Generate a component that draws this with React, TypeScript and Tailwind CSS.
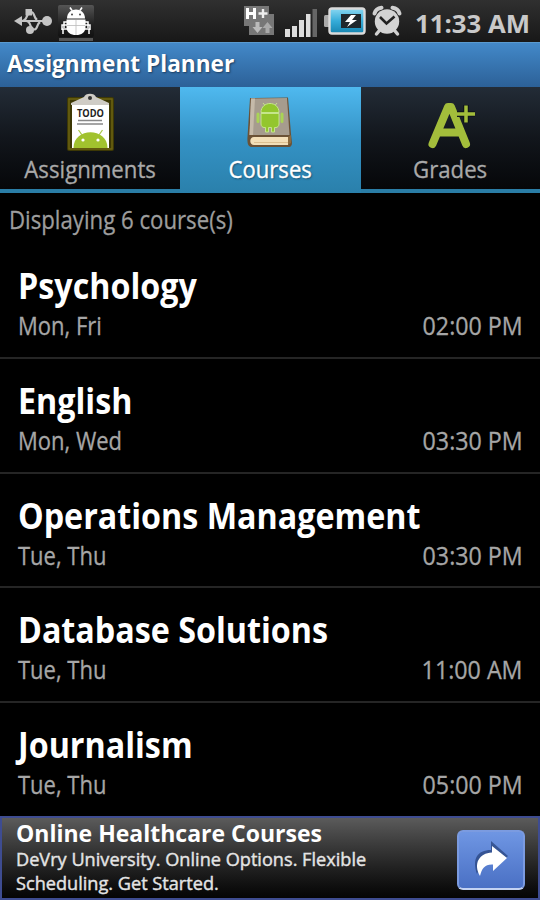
import type { ReactNode } from "react";

const courses = [
  { name: "Psychology", days: "Mon, Fri", time: "02:00 PM" },
  { name: "English", days: "Mon, Wed", time: "03:30 PM" },
  { name: "Operations Management", days: "Tue, Thu", time: "03:30 PM" },
  { name: "Database Solutions", days: "Tue, Thu", time: "11:00 AM" },
  { name: "Journalism", days: "Tue, Thu", time: "05:00 PM" },
];

function UsbIcon() {
  return (
    <svg width="40" height="28" viewBox="0 0 40 28" className="shrink-0" fill="#c4c4c4" stroke="#c4c4c4">
      <path d="M6 14H34M9 14C15 14 13 5 18 5C22 5 20 10 24 13M13 14C19 14 16 22.500 21 22.500C25 22.500 23 18 27 15" fill="none" strokeWidth="2.200" />
      <path d="M1 14L9 9V19Z" stroke="none" />
      <circle cx="34" cy="14" r="5" stroke="none" />
      <rect x="12.500" y="2" width="6.500" height="6.500" stroke="none" />
      <circle cx="17" cy="23" r="4" stroke="none" />
    </svg>
  );
}

function DebugIcon() {
  return (
    <svg width="36" height="38" viewBox="0 0 36 38" className="shrink-0">
      <defs>
        <linearGradient id="debugBg" x1="0" y1="0" x2="0" y2="1">
          <stop offset="0" stopColor="#555" />
          <stop offset="0.600" stopColor="#222" />
          <stop offset="1" stopColor="#111" />
        </linearGradient>
      </defs>
      <rect width="36" height="32" rx="2" fill="url(#debugBg)" />
      <rect x="1" y="33" width="34" height="3" fill="#555" />
      <path d="M12 2.500L14 5.500M24 2.500L22 5.500" stroke="#fff" strokeWidth="1.600" />
      <path d="M9 17H6V23M27 17H30V23M9 20H4V25M27 20H32V25M9 24H5V29M27 24H31V29" stroke="#fff" strokeWidth="1.500" fill="none" />
      <path d="M9 13.500C9 1.500 27 1.500 27 13.500Z" fill="#fff" />
      <path d="M8.500 14.500H27.500V22C27.500 27.500 23.500 30 18 30C12.500 30 8.500 27.500 8.500 22Z" fill="#fff" />
      <path d="M18 15V30M9 20.500H27" stroke="#bbb" strokeWidth="0.800" />
      <circle cx="14" cy="9.500" r="1" fill="#444" />
      <circle cx="22" cy="9.500" r="1" fill="#444" />
    </svg>
  );
}

function DataIcon() {
  return (
    <svg width="32" height="32" viewBox="0 0 32 32" className="shrink-0">
      <path d="M1 1H26V9H31V30H6V21H1Z" fill="#777" />
      <path d="M4.500 3V14M11.500 3V14M4.500 8.500H11.500" stroke="#fff" strokeWidth="3" />
      <path d="M20 4V13M15.500 8.500H24.500" stroke="#eee" strokeWidth="2.400" />
      <path d="M12.500 17H16.500V22H19.500L14.500 28L9.500 22H12.500Z" fill="#bbb" />
      <path d="M22.500 28H26.500V23H29.500L24.500 17L19.500 23H22.500Z" fill="#aaa" />
    </svg>
  );
}

function SignalIcon() {
  return (
    <svg width="34" height="30" viewBox="0 0 34 30" className="shrink-0">
      <g fill="#dcdcdc">
        <rect x="1" y="21" width="5" height="8" />
        <rect x="8" y="18" width="5" height="11" />
        <rect x="15" y="12" width="5" height="17" />
        <rect x="22" y="6" width="4.500" height="23" />
      </g>
      <rect x="28.500" y="1" width="4.500" height="28" fill="#666" />
    </svg>
  );
}

function BatteryIcon() {
  return (
    <svg width="42" height="28" viewBox="0 0 42 28" className="shrink-0">
      <defs>
        <linearGradient id="battery" x1="0" y1="0" x2="0" y2="1">
          <stop offset="0" stopColor="#8bd8f2" />
          <stop offset="0.500" stopColor="#35acd9" />
          <stop offset="1" stopColor="#1684b0" />
        </linearGradient>
      </defs>
      <rect x="0" y="8" width="6" height="12" rx="1.500" fill="#aaa" />
      <rect x="5.500" y="1.500" width="35" height="25" rx="2.500" fill="url(#battery)" stroke="#dadada" strokeWidth="2.400" />
      <rect x="17" y="7" width="20" height="14" fill="#20282d" />
      <path d="M27 8L21 15H26L23 20L33 13H28L32 8Z" fill="#fff" />
    </svg>
  );
}

function AlarmIcon() {
  return (
    <svg width="32" height="32" viewBox="0 0 32 32" className="shrink-0">
      <g stroke="#d0d0d0" fill="none" strokeLinecap="round">
        <path d="M3.500 8.500C4.500 5 7 3.200 10.500 2.800M28.500 8.500C27.500 5 25 3.200 21.500 2.800" strokeWidth="4" />
        <path d="M8 26L5.500 29M24 26L26.500 29" strokeWidth="3.500" />
      </g>
      <circle cx="16" cy="16.500" r="12.200" fill="#d3d3d3" />
      <path d="M9 12L15.500 18.500L23.500 11.500" fill="none" stroke="#222" strokeWidth="2.600" />
    </svg>
  );
}

function TodoIcon() {
  return (
    <svg width="50" height="60" viewBox="0 0 50 60">
      <rect x="2" y="4" width="47" height="54" rx="2" fill="#3d3805" />
      <rect x="4" y="6" width="43" height="50" fill="none" stroke="#6e6412" strokeWidth="1.500" />
      <rect x="7" y="11" width="37" height="44" fill="#fff" />
      <path d="M6 12V10L19 4C20-0.500 30-0.500 31 4L44 10V12Z" fill="#cfccc6" />
      <circle cx="25" cy="5" r="2" fill="#333" />
      <text x="12" y="24" textLength="27" lengthAdjust="spacingAndGlyphs" fontFamily="Open Sans, sans-serif" fontWeight="700" fontSize="10" fill="#222">TODO</text>
      <path d="M13 27.500H37M12 31H38" stroke="#888" strokeWidth="1.300" />
      <path d="M8.500 55C8.500 34 42.500 34 42.500 55Z" fill="#a1c22e" />
      <path d="M17 42L13.500 37M34 42L37.500 37" stroke="#a9c94a" strokeWidth="1.300" />
      <circle cx="18" cy="47" r="1.600" fill="#fff" />
      <circle cx="33" cy="47" r="1.600" fill="#fff" />
    </svg>
  );
}

function BookIcon() {
  return (
    <svg width="48" height="60" viewBox="0 0 48 60">
      <path d="M4 5L42 4.500L45 41L46 50C46 52 45 54 43 54H6C2.500 54 1 51 1.500 44Z" fill="#6b5236" />
      <path d="M5 5.500L41 5L43.500 42H3.500Z" fill="#a69c8e" />
      <path d="M5 5.500L9 5.500L7 42H3.500Z" fill="#c5baa9" />
      <path d="M42 44H8C3 44 3 52 8 52H42Z" fill="#f3dfb8" />
      <path d="M8 49.500H42" stroke="#dcbf90" strokeWidth="1" />
      <path d="M42 44L45 42V50L42 52" fill="#8b6a3e" />
      <g stroke="#c5e68b" strokeWidth="1">
        <path d="M17 10L19.500 13M31 10L28.500 13" />
        <path d="M15 19.500C15 7.500 33 7.500 33 19.500Z" fill="#93c62e" />
        <path d="M15 20.500H33V31C33 33 31.500 34.500 30 34.500H28.500V39H25.500V34.500H22.500V39H19.500V34.500H18C16.500 34.500 15 33 15 31Z" fill="#93c62e" />
        <path d="M12 21V28.500M36 21V28.500" stroke="#a9d455" strokeWidth="3" strokeLinecap="round" />
      </g>
    </svg>
  );
}

function GradeIcon() {
  return (
    <svg width="52" height="60" viewBox="0 0 52 60" fill="none">
      <path d="M8.500 51L24 14H27L42 51M15 39.500H36" stroke="#a3bd3b" strokeWidth="8" strokeLinecap="round" strokeLinejoin="round" />
      <path d="M42 12V30M33 21H51" stroke="#10151b" strokeWidth="6" />
      <path d="M42 12.500V29.500M33 21H51" stroke="#a3bd3b" strokeWidth="3.500" />
    </svg>
  );
}

function Tab({ icon, label, active }: { icon: ReactNode; label: string; active?: boolean }) {
  return (
    <div
      className={
        active
          ? "flex h-[106px] w-[181px] flex-col items-center bg-linear-to-b from-[#4fb9ef] via-[#3492c5] to-[#2a80ab] pt-[6px]"
          : "flex h-[102px] flex-1 flex-col items-center bg-linear-to-b from-[#232c37] via-[#12161c] to-[#060709] pt-[6px]"
      }
    >
      <div className="h-[61px]">{icon}</div>
      <span
        className={
          active
            ? "scale-x-[0.92] whitespace-nowrap text-[24px] leading-[30px] text-white [-webkit-text-stroke:0.4px] [text-shadow:1px_1px_2px_#164a66]"
            : "scale-x-[0.925] whitespace-nowrap text-[24px] leading-[30px] text-[#a9a9a9] [-webkit-text-stroke:0.3px]"
        }
      >
        {label}
      </span>
    </div>
  );
}

export default function App() {
  return (
    <div className="flex h-[900px] w-[540px] flex-col overflow-hidden bg-black font-['Open_Sans','Noto_Sans',sans-serif]">
      {/* Status bar */}
      <div className="flex h-[42px] shrink-0 items-center bg-linear-to-b from-[#303030] to-[#181818] pl-[13px]">
        <UsbIcon />
        <div className="ml-[5px] mt-[5px]"><DebugIcon /></div>
        <div className="ml-[149px]"><DataIcon /></div>
        <div className="ml-[9px] mt-[3px]"><SignalIcon /></div>
        <div className="ml-[6px]"><BatteryIcon /></div>
        <div className="ml-[5px]"><AlarmIcon /></div>
        <span className="ml-[12px] mt-[3px] origin-left scale-x-[1.03] whitespace-nowrap text-[25px] font-bold leading-[30px] text-[#c9c9c9]">11:33 AM</span>
      </div>

      {/* Title bar */}
      <div className="flex h-[45px] shrink-0 items-center border-t border-[#5a9bd0] bg-linear-to-b from-[#4389c9] to-[#2c6198] pl-[7px]">
        <h1 className="-mt-[4px] origin-left scale-x-[0.985] whitespace-nowrap text-[23px] font-bold leading-[42px] text-white [text-shadow:1px_1px_2px_#1b3c5f]">Assignment Planner</h1>
      </div>

      {/* Tabs */}
      <div className="flex h-[106px] shrink-0 items-start bg-[#2a7da6]">
        <Tab icon={<TodoIcon />} label="Assignments" />
        <Tab active icon={<BookIcon />} label="Courses" />
        <Tab icon={<GradeIcon />} label="Grades" />
      </div>

      <p className="ml-[9px] mt-[11px] h-[40px] w-max shrink-0 origin-left scale-x-[0.888] whitespace-nowrap text-[25px] leading-[30px] text-[#9d9d9d] [-webkit-text-stroke:0.3px]">Displaying 6 course(s)</p>

      {/* Course list */}
      <div className="flex h-[572px] shrink-0 flex-col overflow-hidden">
        {courses.map((course) => (
          <div key={course.name} className="h-[114.8px] shrink-0 border-b-2 border-[#252525] pl-[18px] pr-[17px] pt-[22px]">
            <h2 className="w-max origin-left scale-x-[0.896] whitespace-nowrap text-[36px] font-bold leading-[40px] text-white">{course.name}</h2>
            <div className="mt-[4px] flex justify-between text-[25px] leading-[30px] text-[#a6a6a6] [-webkit-text-stroke:0.3px]">
              <span className="origin-left scale-x-[0.88]">{course.days}</span>
              <span className="origin-right scale-x-[0.93]">{course.time}</span>
            </div>
          </div>
        ))}
      </div>

      {/* Ad banner */}
      <div className="flex h-[84px] shrink-0 justify-between border-2 border-[#3e4c91] bg-linear-to-b from-[#5b5b5b] via-[#2c2c2c] to-[#050505] pl-[14px] pr-[13px]">
        <div className="whitespace-nowrap pt-[1px]">
          <h3 className="w-max text-[23px] font-bold leading-[28px] text-white">Online Healthcare Courses</h3>
          <p className="w-max origin-left scale-x-[1.008] text-[18px] leading-[24px] text-[#e4e4e4] [-webkit-text-stroke:0.4px]">
            DeVry University. Online Options. Flexible
            <br />
            Scheduling. Get Started.
          </p>
        </div>
        <div className="mt-[12px] flex h-[60px] w-[68px] items-center justify-center rounded-[6px] border-2 border-[#7b9be0] border-b-[#c3d2f2] bg-linear-to-b from-[#6f96e3] to-[#4a70c4]">
          <svg width="40" height="40" viewBox="0 0 40 40">
            <path d="M20 1L37 16L22 30V23C14 23 9 25 6 34C1 19 6 10 20 10Z" fill="#243f78" opacity="0.700" />
            <path d="M21 6L36 18L22 31V24.500C14 24 11 28 9 36C2 24 8 13 21 12.500Z" fill="#fff" />
          </svg>
        </div>
      </div>
    </div>
  );
}
